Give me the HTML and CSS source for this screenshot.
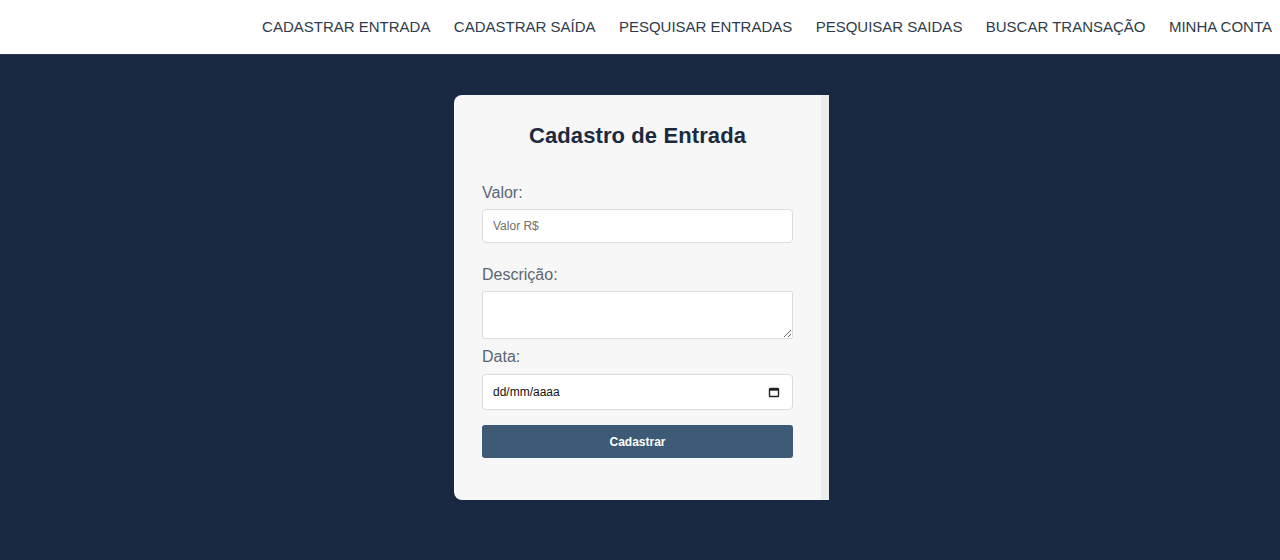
FILE: index.html
```html
<!DOCTYPE html>
<html lang="pt-BR">
<head>
<meta charset="utf-8">
<title>Cadastro de Entrada</title>
<link rel="stylesheet" href="styles.css">
</head>
<body>
<header class="topbar">
  <nav class="nav">
    <a href="#">CADASTRAR ENTRADA</a>
    <a href="#">CADASTRAR SAÍDA</a>
    <a href="#">PESQUISAR ENTRADAS</a>
    <a href="#">PESQUISAR SAIDAS</a>
    <a href="#">BUSCAR TRANSAÇÃO</a>
    <a href="#">MINHA CONTA</a>
  </nav>
</header>
<main class="main">
  <section class="card">
    <div class="card-body">
      <h2 class="title">Cadastro de Entrada</h2>
      <form class="form">
        <label class="label" for="valor">Valor:</label>
        <input class="field" id="valor" type="text" placeholder="Valor R$">
        <label class="label label-desc" for="desc">Descrição:</label>
        <textarea class="field area" id="desc"></textarea>
        <label class="label label-data" for="data">Data:</label>
        <div class="field date">
          <input class="date-input" id="data" type="text" placeholder="dd/mm/aaaa">
          <svg class="cal" width="12" height="12" viewBox="0 0 12 12" aria-hidden="true">
            <rect x="1.5" y="2.5" width="9" height="8" rx="0.8" fill="none" stroke="#222" stroke-width="1.4"/>
            <rect x="1.5" y="2.5" width="9" height="2.2" fill="#222"/>
          </svg>
        </div>
        <button class="btn" type="button">Cadastrar</button>
      </form>
    </div>
    <div class="strip"></div>
  </section>
</main>
</body>
</html>
```

FILE: styles.css
```css
* { box-sizing: border-box; }
html, body { margin: 0; height: 100%; }
body {
  background: #182840;
  font-family: "Liberation Sans", Arial, sans-serif;
}
.topbar {
  background: #ffffff;
  height: 55px;
  display: flex;
  align-items: center;
  justify-content: flex-end;
  border-bottom: 1px solid #2a3a52;
}
.nav {
  display: flex;
  gap: 23.4px;
  padding-right: 8px;
}
.nav a {
  color: #2f3b4a;
  text-decoration: none;
  font-size: 15px;
  line-height: 18px;
}
.main {
  display: flex;
  justify-content: center;
  padding-top: 40px;
  padding-left: 3px;
}
.card {
  display: flex;
  width: 375px;
  height: 405px;
  background: #f7f7f7;
  border-radius: 8px 0 0 8px;
  overflow: hidden;
}
.card-body {
  width: 367px;
  padding: 28px 28px;
}
.strip {
  width: 8px;
  background: #ececec;
}
.title {
  margin: 0;
  text-align: center;
  font-size: 22px;
  line-height: 26px;
  font-weight: bold;
  color: #1c2a3f;
  letter-spacing: 0.1px;
}
.form {
  display: flex;
  flex-direction: column;
  margin-top: 35px;
}
.label {
  font-size: 16px;
  line-height: 18px;
  color: #5b6673;
  margin-bottom: 7px;
}
.label-desc { margin-top: 23px; }
.label-data { margin-top: 9px; margin-bottom: 8px; }
.field {
  width: 311px;
  height: 34px;
  border: 1px solid #dcdcdc;
  border-radius: 4px;
  background: #fff;
  padding: 0 10px;
  font-family: "Liberation Sans", Arial, sans-serif;
  font-size: 12px;
  color: #222;
  outline: none;
}
.field::placeholder { color: #6f6f6f; }
.area {
  height: 48px;
  border-radius: 2px;
  resize: vertical;
  padding: 6px 10px;
}
.date {
  height: 36px;
  display: flex;
  align-items: center;
  justify-content: space-between;
  padding: 0 12px 0 10px;
}
.date-input {
  border: none;
  outline: none;
  background: transparent;
  font-family: "Liberation Sans", Arial, sans-serif;
  font-size: 12px;
  padding: 0;
  width: 120px;
}
.date-input::placeholder { color: #111; }
.cal { display: block; }
.btn {
  margin-top: 15px;
  width: 311px;
  height: 33px;
  border: none;
  border-radius: 3px;
  background: #3d5a76;
  color: #fff;
  font-family: "Liberation Sans", Arial, sans-serif;
  font-size: 12px;
  font-weight: bold;
}
```
